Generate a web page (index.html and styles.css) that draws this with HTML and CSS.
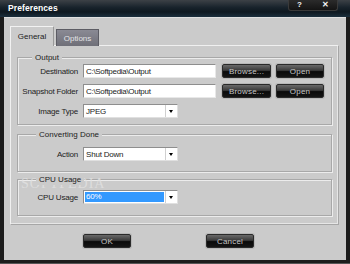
FILE: index.html
```html
<!DOCTYPE html>
<html>
<head>
    <title>Preferences</title>
    <link rel="stylesheet" href="styles.css">
</head>
<body>
    <div class="window">
        <div class="titlebar">
            <span class="title">Preferences</span>
            <div class="controls">
                <span class="ctl">?</span>
                <span class="ctl close">&#x2715;</span>
            </div>
        </div>

        <div class="client">
            <div class="tabs">
                <div class="tab active">General</div>
                <div class="tab">Options</div>
            </div>

            <div class="panel">
                <!-- Output -->
                <div class="group group-output">
                    <span class="group-title">Output</span>
                    <div class="row">
                        <label>Destination</label>
                        <div class="input">C:\Softpedia\Output</div>
                        <button class="btn btn-browse">Browse...</button>
                        <button class="btn">Open</button>
                    </div>
                    <div class="row">
                        <label>Snapshot Folder</label>
                        <div class="input">C:\Softpedia\Output</div>
                        <button class="btn btn-browse">Browse...</button>
                        <button class="btn">Open</button>
                    </div>
                    <div class="row">
                        <label>Image Type</label>
                        <div class="select"><span class="value">JPEG</span><span class="arrow"></span></div>
                    </div>
                </div>

                <!-- Converting Done -->
                <div class="group group-convert">
                    <span class="group-title">Converting Done</span>
                    <div class="row">
                        <label>Action</label>
                        <div class="select"><span class="value">Shut Down</span><span class="arrow"></span></div>
                    </div>
                </div>

                <!-- CPU Usage -->
                <div class="group group-cpu">
                    <span class="watermark">SOFTPEDIA</span>
                    <span class="group-title">CPU Usage</span>
                    <div class="row">
                        <label>CPU Usage</label>
                        <div class="select selected"><span class="value">60%</span><span class="arrow"></span></div>
                    </div>
                </div>
            </div>

            <div class="footer">
                <button class="btn">OK</button>
                <button class="btn">Cancel</button>
            </div>
        </div>
    </div>
</body>
</html>
```

FILE: styles.css
```css
body { margin: 0; font-family: "Liberation Sans", Arial, sans-serif; font-size: 8px; color: #222; }
.window { width: 350px; height: 264px; background: #1c1c1c; display: flex; flex-direction: column; box-sizing: border-box; border-bottom: 1px solid #555; }
.titlebar { height: 17px; display: flex; align-items: flex-start; background: linear-gradient(#3c4146, #17222b 45%, #0e1820 70%, #1b2f3d); }
.title { color: #fff; font-weight: bold; font-size: 8.5px; padding: 3px 0 0 8px; letter-spacing: 0.1px; }
.controls { margin-left: auto; margin-right: 12px; width: 50px; height: 11px; background: linear-gradient(#2b2b2b, #141414); border: 1px solid #3a3a3a; border-top: none; border-radius: 0 0 3px 3px; display: flex; justify-content: space-between; align-items: center; padding: 0 8px 0 8px; box-sizing: border-box; }
.ctl { color: #f4f4f4; font-weight: bold; font-size: 8px; line-height: 10px; }
.ctl.close { font-size: 8px; }

.client { flex: 1; margin: 0 4px 3px 4px; background: #cbcbcb; padding: 8px 7px 0 6px; border-top: 1px solid #e0e0e0; }
.tabs { display: flex; align-items: flex-end; gap: 2px; margin-bottom: -1px; position: relative; z-index: 1; }
.tab { height: 17px; width: 43px; box-sizing: border-box; display: flex; align-items: center; justify-content: center; background: linear-gradient(#8a8a94, #6f6f78); color: #e4e4e8; border: 1px solid #5c5c64; border-bottom: none; }
.tab.active { height: 20px; width: 44px; background: #cbcbcb; color: #222; border: 1px solid #f2f2f2; border-right-color: #9a9a9a; border-bottom: none; }

.panel { height: 180px; box-sizing: border-box; border: 1px solid #f0f0f0; border-right-color: #a6a6a6; border-bottom-color: #a6a6a6; box-shadow: inset -1px -1px 0 #e6e6e6; padding: 11px 6px 0 6px; }

.group { position: relative; border: 1px solid #a8a8a8; box-shadow: inset 1px 1px 0 #ececec, 1px 1px 0 #ececec; }
.group-output { padding: 6px 0 6px 0; }
.group-convert { margin-top: 9px; padding: 12px 0 10px 0; }
.group-cpu { margin-top: 7px; padding: 10px 0 11px 0; }
.group-title { position: absolute; top: -6px; left: 14px; background: #cbcbcb; padding: 0 3px; line-height: 11px; }
.group-convert .group-title, .group-cpu .group-title { left: 18px; }
.watermark { position: absolute; top: -4px; left: 3px; font-family: "Liberation Serif", serif; font-size: 14px; letter-spacing: 1px; color: #e2e2e2; opacity: 0.8; }

.row { display: flex; align-items: center; height: 14px; }
.row + .row { margin-top: 6px; }
.row label { width: 60px; margin-right: 5px; text-align: right; white-space: nowrap; letter-spacing: -0.2px; }

.input { width: 133px; height: 14px; box-sizing: border-box; background: #fff; border: 1px solid #8e8e8e; border-right-color: #e8e8e8; border-bottom-color: #e8e8e8; padding: 1px 0 0 2px; line-height: 11px; letter-spacing: -0.3px; margin-right: 6px; }
.select { width: 95px; height: 14px; box-sizing: border-box; background: #fff; border: 1px solid #8e8e8e; border-right-color: #e0e0e0; border-bottom-color: #e0e0e0; display: flex; }
.select .value { flex: 1; padding: 1px 0 0 2px; line-height: 11px; letter-spacing: -0.2px; }
.select.selected .value { background: #3399ff; color: #fff; margin: 1px; padding: 0 0 0 1px; line-height: 10px; }
.select .arrow { width: 11px; border-left: 1px solid #d0d0d0; background: #fff; position: relative; }
.select .arrow::after { content: ""; position: absolute; left: 3px; top: 5px; border-left: 2.5px solid transparent; border-right: 2.5px solid transparent; border-top: 3px solid #000; }

.btn { width: 48px; height: 14px; padding: 0; font-family: inherit; font-size: 8px; color: #c4c4c4; background: linear-gradient(#6a6a6a, #3a3a3a 45%, #0a0a0a 55%, #151515); border: 1px solid #2a2a2a; border-radius: 2px; box-shadow: 0 0 0 1px #b8b8b8; letter-spacing: 0.2px; }
.btn + .btn { margin-left: 5px; }
.btn-browse { width: 49px; }

.footer { display: flex; padding: 9px 0 0 73px; }
.footer .btn + .btn { margin-left: 75px; }
```
